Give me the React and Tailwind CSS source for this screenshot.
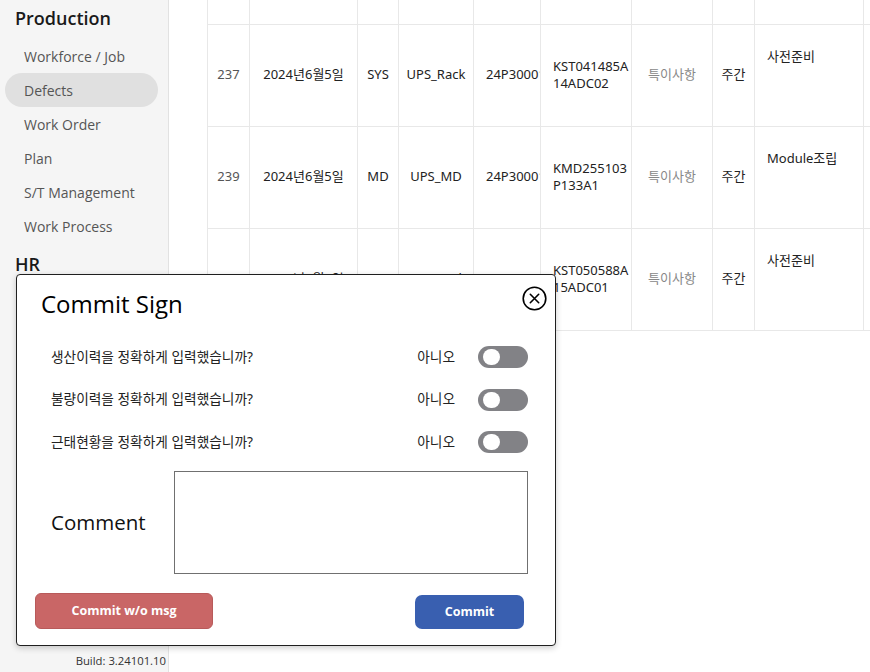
const navItems = ['Workforce / Job', 'Defects', 'Work Order', 'Plan', 'S/T Management', 'Work Process']

const rows = [
  { no: '237', date: '2024년6월5일', line: 'SYS', model: 'UPS_Rack', lot: '24P300012', serial: 'KST041485A14ADC02', process: '사전준비' },
  { no: '239', date: '2024년6월5일', line: 'MD', model: 'UPS_MD', lot: '24P300012', serial: 'KMD255103P133A1', process: 'Module조립' },
  { no: '240', date: '2024년6월5일', line: 'SYS', model: 'UPS_Rack', lot: '24P300012', serial: 'KST050588A15ADC01', process: '사전준비' },
]

const questions = [
  '생산이력을 정확하게 입력했습니까?',
  '불량이력을 정확하게 입력했습니까?',
  '근태현황을 정확하게 입력했습니까?',
]

const colWidths = [42, 108, 41, 75, 67, 91, 81, 42, 109, 120]

function Sidebar() {
  return (
    <aside className="flex h-[672px] w-[169px] shrink-0 flex-col border-r border-[#e2e2e2] bg-[#f5f5f5] font-['Open_Sans',sans-serif]">
      <h2 className="pl-[15px] pt-[6px] text-[18px] font-semibold leading-[24px] text-[#1a1a1a]">Production</h2>
      <ul className="mt-[9px]">
        {navItems.map((item) => (
          <li
            key={item}
            className={
              'mx-[5px] flex h-[34px] w-[153px] items-center rounded-full pl-[19px] text-[14px] text-[#555]' +
              (item === 'Defects' ? ' bg-[#e0e0e0]' : '')
            }
          >
            {item}
          </li>
        ))}
      </ul>
      <h2 className="mt-[9px] pl-[15px] text-[18px] font-semibold leading-[24px] text-[#1a1a1a]">HR</h2>
      <p className="mt-auto pb-[3px] pr-[2px] text-right text-[11.3px] leading-[16px] text-[#333]">Build: 3.24101.10</p>
    </aside>
  )
}

function DataTable() {
  const cell = 'border border-[#e8e8e8] text-[13px]'
  return (
    <table className="ml-[38px] w-[776px] min-w-[776px] table-fixed border-collapse font-['Noto_Sans','Noto_Sans_CJK_KR',sans-serif]">
      <colgroup>
        {colWidths.map((w, i) => (
          <col key={i} style={{ width: w }} />
        ))}
      </colgroup>
      <tbody>
        <tr className="h-[24px]">
          {colWidths.map((_, i) => (
            <td key={i} className="border border-t-0 border-[#e8e8e8]" />
          ))}
        </tr>
        {rows.map((r) => (
          <tr key={r.no} className="h-[102px]">
            <td className={cell + ' text-center text-[#555]'}>{r.no}</td>
            <td className={cell + ' text-center text-[#222]'}>{r.date}</td>
            <td className={cell + ' text-center text-[#222]'}>{r.line}</td>
            <td className={cell + ' text-center text-[#222]'}>{r.model}</td>
            <td className={cell + ' text-[#222]'}>
              <div className="overflow-hidden whitespace-nowrap pl-[12px]">{r.lot}</div>
            </td>
            <td className={cell + ' break-all pl-[12px] leading-[17px] text-[#222]'}>{r.serial}</td>
            <td className={cell + ' text-center text-[#888]'}>특이사항</td>
            <td className={cell + ' text-center text-[#222]'}>주간</td>
            <td className={cell + ' pl-[12px] pt-[22px] align-top text-[#222]'}>{r.process}</td>
            <td className={cell} />
          </tr>
        ))}
      </tbody>
    </table>
  )
}

function Toggle() {
  return (
    <div className="flex h-[22px] w-[50px] items-center rounded-full bg-[#828286] pl-[5px]">
      <div className="h-[16px] w-[17px] rounded-full bg-white" />
    </div>
  )
}

function CommitModal() {
  return (
    <div className="absolute left-[16px] top-[274px] flex w-[540px] flex-col rounded-[4px] border border-[#1f1f1f] bg-white font-['Open_Sans','Noto_Sans_CJK_KR',sans-serif] shadow-[0_2px_6px_rgba(0,0,0,0.2)]">
      <button type="button" className="absolute right-[8px] top-[11px] text-black">
        <svg width="25" height="25" viewBox="0 0 25 25" fill="none" stroke="currentColor" strokeWidth="1.6">
          <circle cx="12.5" cy="12.5" r="11.3" />
          <path d="M8.3 8.3l8.4 8.4M16.7 8.3l-8.4 8.4" strokeLinecap="round" />
        </svg>
      </button>
      <h3 className="pl-[24px] pt-[13px] text-[24px] font-medium leading-[32px] text-black">Commit Sign</h3>
      <div className="mt-[16px]">
        {questions.map((q) => (
          <div key={q} className="flex h-[42.5px] items-center pl-[34px] pr-[27px] font-['Noto_Sans','Noto_Sans_CJK_KR',sans-serif] text-[13.7px] text-[#222]">
            <span className="flex-1">{q}</span>
            <span className="mr-[23px]">아니오</span>
            <Toggle />
          </div>
        ))}
      </div>
      <div className="mt-[7.5px] flex items-center">
        <span className="w-[157px] pl-[34px] text-[20.5px] text-[#111]">Comment</span>
        <textarea className="h-[103px] w-[354px] resize-none border border-[#707070] outline-none" />
      </div>
      <div className="mt-[19px] flex items-end justify-between pb-[16px] pl-[18px] pr-[31px]">
        <button
          type="button"
          className="h-[36px] w-[178px] rounded-[6px] border border-[#b85a5a] bg-[#c96666] text-[12.5px] font-bold text-white"
        >
          Commit w/o msg
        </button>
        <button type="button" className="h-[34px] w-[109px] rounded-[7px] bg-[#395fb0] text-[12.5px] font-bold text-white">
          Commit
        </button>
      </div>
    </div>
  )
}

export default function App() {
  return (
    <div className="relative flex h-[672px] w-[870px] overflow-hidden bg-white">
      <Sidebar />
      <main className="flex-1 overflow-hidden">
        <DataTable />
      </main>
      <CommitModal />
    </div>
  )
}
